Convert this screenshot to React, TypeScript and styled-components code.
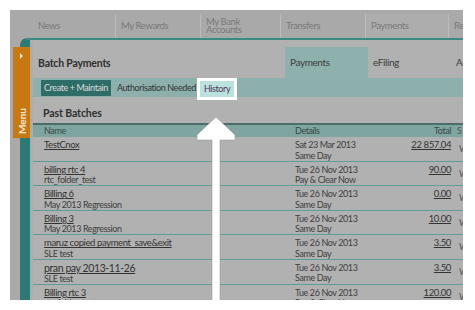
import styled, { createGlobalStyle } from "styled-components";

const GlobalStyle = createGlobalStyle`
  body {
    margin: 0;
    background: #ffffff;
    font-family: Lato, "Open Sans", sans-serif;
  }
`;

interface IBatch {
  name: string;
  note: string;
  date: string;
  speed: string;
  total: string;
}

const navItems = [
  { label: "News", w: 85 },
  { label: "My Rewards", w: 85 },
  { label: "My Bank\nAccounts", w: 80 },
  { label: "Transfers", w: 85 },
  { label: "Payments", w: 83, active: true },
  { label: "Re", w: 40 },
];

const batches: IBatch[] = [
  { name: "TestCnox", note: "", date: "Sat 23 Mar 2013", speed: "Same Day", total: "22 857.04" },
  { name: "billing rtc 4", note: "rtc_folder_test", date: "Tue 26 Nov 2013", speed: "Pay & Clear Now", total: "90.00" },
  { name: "Billing 6", note: "May 2013 Regression", date: "Tue 26 Nov 2013", speed: "Same Day", total: "0.00" },
  { name: "Billing 3", note: "May 2013 Regression", date: "Tue 26 Nov 2013", speed: "Same Day", total: "10.00" },
  { name: "maruz copied payment_save&exit", note: "SLE test", date: "Tue 26 Nov 2013", speed: "Same Day", total: "3.50" },
  { name: "pran pay 2013-11-26", note: "SLE test", date: "Tue 26 Nov 2013", speed: "Same Day", total: "3.50" },
  { name: "Billing rtc 3", note: "rtc_folder_test", date: "Tue 26 Nov 2013", speed: "Pay & Clear Now", total: "120.00" },
];

export default function App() {
  return (
    <>
      <GlobalStyle />
      <Frame>
        <Screen>
          <TopNav>
            {navItems.map((item, i) => (
              <NavItem key={item.label} $w={item.w} $first={i === 0} $active={!!item.active}>
                {item.label}
              </NavItem>
            ))}
          </TopNav>

          <Panel>
            <Content>
              <Header>
                <Title>Batch Payments</Title>
                <Tab $active>Payments</Tab>
                <Tab>eFiling</Tab>
                <Tab>Ar</Tab>
              </Header>

              <SubNav>
                <PrimaryBtn>Create + Maintain</PrimaryBtn>
                <SubLink>Authorisation Needed</SubLink>
                <Highlight>History</Highlight>
              </SubNav>

              <SectionTitle>Past Batches</SectionTitle>

              <Table>
                <HeadRow>
                  <NameCell>Name</NameCell>
                  <Cell>Details</Cell>
                  <TotalCell>Total</TotalCell>
                  <StatusCell>S</StatusCell>
                </HeadRow>
                {batches.map((b) => (
                  <Row key={b.name}>
                    <NameCell>
                      <LinkText $big={b.name.startsWith("pran")}>{b.name}</LinkText>
                      <Line>{b.note}</Line>
                    </NameCell>
                    <Cell>
                      <Line>{b.date}</Line>
                      <Line>{b.speed}</Line>
                    </Cell>
                    <TotalCell>
                      <LinkText>{b.total}</LinkText>
                    </TotalCell>
                    <StatusCell $mid>W</StatusCell>
                  </Row>
                ))}
              </Table>
            </Content>
          </Panel>

          <MenuTab>
            <MenuCaret />
            <MenuLabel>Menu</MenuLabel>
          </MenuTab>

          <Arrow width="42" height="190" viewBox="0 0 42 190">
            <path
              d="M21 1 L40 19 L40 24 L25 24 L25 190 L17 190 L17 24 L2 24 L2 19 Z"
              fill="#ffffff"
              stroke="#9a9a9a"
              strokeWidth="0.6"
            />
          </Arrow>
        </Screen>
      </Frame>
    </>
  );
}

const Frame = styled.div`
  width: 475px;
  height: 310px;
  padding: 10px 12px 10px 10px;
  box-sizing: border-box;
`;

const Screen = styled.div`
  position: relative;
  width: 453px;
  height: 290px;
  background: #a9a9a9;
  overflow: hidden;
  color: #3b3b3b;
  font-size: 9.5px;
  letter-spacing: -0.4px;
`;

const TopNav = styled.div`
  display: flex;
  height: 28px;
  padding-left: 20px;
  white-space: nowrap;
`;

const NavItem = styled.div<{ $w: number; $first?: boolean; $active?: boolean }>`
  flex: 0 0 ${(p) => p.$w}px;
  display: flex;
  align-items: center;
  padding-left: ${(p) => (p.$first ? 7 : 5)}px;
  margin: 4px 0 0;
  box-sizing: border-box;
  border-left: 1px solid ${(p) => (p.$first ? "transparent" : "#bdbdbd")};
  background: ${(p) => (p.$active ? "#adadad" : "transparent")};
  color: #7a7a7a;
  font-size: 9.5px;
  line-height: 8px;
  white-space: pre;
`;

const Panel = styled.div`
  margin-left: 10px;
  height: 262px;
  border-top: 2px solid #3c8a84;
  border-left: 10px solid #2c7a74;
  border-top-left-radius: 7px;
  background: #adadad;
`;

const Content = styled.div`
  margin-left: 3px;
  height: 100%;
  background: #b1b1b1;
`;

const Header = styled.div`
  display: grid;
  grid-template-columns: 252px 83px 83px 1fr;
  height: 38px;
`;

const Title = styled.div`
  align-self: end;
  padding: 0 0 9px 5px;
  font-weight: 700;
  font-size: 10.5px;
  letter-spacing: -0.2px;
  color: #2f2f2f;
`;

const Tab = styled.div<{ $active?: boolean }>`
  margin-top: 7px;
  padding: 9px 0 0 5px;
  background: ${(p) => (p.$active ? "#8fb1ad" : "transparent")};
  color: #3d3d3d;
  font-size: 10px;
`;

const SubNav = styled.div`
  display: flex;
  align-items: flex-start;
  height: 19px;
  background: #8eb0ac;
  padding-left: 8px;
  font-size: 9px;
`;

const PrimaryBtn = styled.div`
  margin-top: 2px;
  height: 16px;
  line-height: 16px;
  padding: 0 3px;
  background: #2e6c67;
  color: #dcdcdc;
`;

const SubLink = styled.div`
  margin: 2px 0 0 6px;
  line-height: 16px;
  color: #333;
`;

const Highlight = styled.div`
  margin-left: 1px;
  height: 16px;
  line-height: 16px;
  padding: 0 4px;
  border: 3px solid #ffffff;
  background: #bde1de;
  color: #4b3a58;
  position: relative;
  z-index: 1;
`;

const SectionTitle = styled.div`
  height: 26px;
  padding: 10px 0 0 10px;
  box-sizing: border-box;
  font-weight: 700;
  font-size: 10.5px;
  letter-spacing: -0.1px;
  color: #2f2f2f;
`;

const Table = styled.div`
  border-top: 2px solid #4c6e6b;
`;

const HeadRow = styled.div`
  display: grid;
  grid-template-columns: 262px 100px 56px 1fr;
  height: 12px;
  line-height: 12px;
  background: #7fa5a1;
  color: #384846;
  font-size: 9px;
`;

const Row = styled.div`
  display: grid;
  grid-template-columns: 262px 100px 56px 1fr;
  height: 24.6px;
  box-sizing: border-box;
  padding-top: 3px;
  border-bottom: 1px solid #5d9f98;
  font-size: 9px;
  line-height: 10.5px;
  overflow: hidden;
`;

const Cell = styled.div`
  white-space: nowrap;
`;

const NameCell = styled(Cell)`
  padding-left: 11px;
`;

const TotalCell = styled(Cell)`
  text-align: right;
`;

const StatusCell = styled(Cell)<{ $mid?: boolean }>`
  padding: ${(p) => (p.$mid ? "4px 0 0 8px" : "0 0 0 6px")};
  color: #555;
`;

const Line = styled.div`
  color: #3e3e3e;
`;

const LinkText = styled.div<{ $big?: boolean }>`
  display: inline-block;
  text-decoration: underline;
  color: #333;
  font-size: ${(p) => (p.$big ? 10.5 : 9.5)}px;
`;

const MenuTab = styled.div`
  position: absolute;
  left: 3px;
  top: 37px;
  width: 17px;
  height: 91px;
  background: #c7790f;
  display: flex;
  flex-direction: column;
  align-items: center;
  justify-content: space-between;
  padding: 6px 0 4px;
  box-sizing: border-box;
`;

const MenuCaret = styled.div`
  width: 0;
  height: 0;
  border-top: 3px solid transparent;
  border-bottom: 3px solid transparent;
  border-left: 3px solid #f2e2cc;
`;

const MenuLabel = styled.div`
  writing-mode: vertical-rl;
  transform: rotate(180deg);
  color: #f3e6d6;
  font-weight: 700;
  font-size: 10px;
  letter-spacing: 0;
`;

const Arrow = styled.svg`
  position: absolute;
  left: 185px;
  top: 106px;
  z-index: 2;
`;
